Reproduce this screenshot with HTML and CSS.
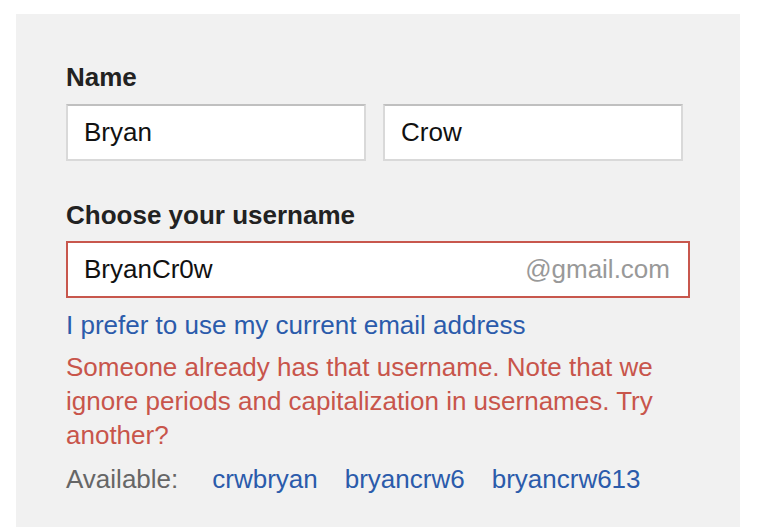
FILE: index.html
```html
<!DOCTYPE html>
<html lang="en">
<head>
    <meta charset="UTF-8">
    <meta name="viewport" content="width=device-width, initial-scale=1.0">
    <title>Create your account</title>
    <link rel="stylesheet" href="styles.css">
</head>
<body>
    <div class="panel">
        <label class="label">Name</label>
        <div class="name-row">
            <input class="field" type="text" value="Bryan">
            <input class="field" type="text" value="Crow">
        </div>

        <label class="label username-label">Choose your username</label>
        <div class="field username-box">
            <input class="username-input" type="text" value="BryanCr0w">
            <span class="suffix">@gmail.com</span>
        </div>
        <a class="link current-email" href="#">I prefer to use my current email address</a>
        <p class="error">Someone already has that username. Note that we ignore periods and capitalization in usernames. Try another?</p>
        <div class="available">
            <span class="available-label">Available:</span>
            <a class="link" href="#">crwbryan</a>
            <a class="link" href="#">bryancrw6</a>
            <a class="link" href="#">bryancrw613</a>
        </div>
    </div>
</body>
</html>
```

FILE: styles.css
```css
body{
    margin: 0;
    background-color: #fff;
    font-family: "Liberation Sans", Arial, sans-serif;
    overflow: hidden;
}
.panel{
    margin: 14px 0 0 16px;
    width: 724px;
    min-height: calc(100vh - 14px);
    box-sizing: border-box;
    padding: 48px 50px 0;
    background-color: #f1f1f1;
}
.label{
    display: block;
    font-size: 26px;
    line-height: 30px;
    font-weight: bold;
    color: #222;
    margin-bottom: 12px;
}
.username-label{
    margin-top: 39px;
    margin-bottom: 11px;
}
.name-row{
    display: flex;
    gap: 17px;
}
.field{
    box-sizing: border-box;
    width: 300px;
    height: 57px;
    padding: 0 16px;
    border: 2px solid #d9d9d9;
    border-top-color: #c0c0c0;
    background-color: #fff;
    font-family: inherit;
    font-size: 26px;
    color: #111;
    outline: none;
}
.username-box{
    display: flex;
    align-items: center;
    width: 624px;
    padding-right: 18px;
    border-color: #c8574d;
}
.username-input{
    flex: 1;
    min-width: 0;
    border: none;
    padding: 0;
    background: transparent;
    font-family: inherit;
    font-size: 26px;
    color: #111;
    outline: none;
}
.suffix{
    color: #999;
    font-size: 26px;
}
.link{
    color: #2b5bab;
    text-decoration: none;
}
.current-email{
    display: block;
    margin-top: 10px;
    font-size: 26px;
    line-height: 34px;
}
.error{
    margin: 8px 0 0;
    width: 600px;
    font-size: 26px;
    line-height: 34px;
    color: #c8554b;
}
.available{
    display: flex;
    gap: 27px;
    margin-top: 10px;
    font-size: 26px;
    line-height: 34px;
}
.available-label{
    color: #666;
    margin-right: 7px;
}
```
